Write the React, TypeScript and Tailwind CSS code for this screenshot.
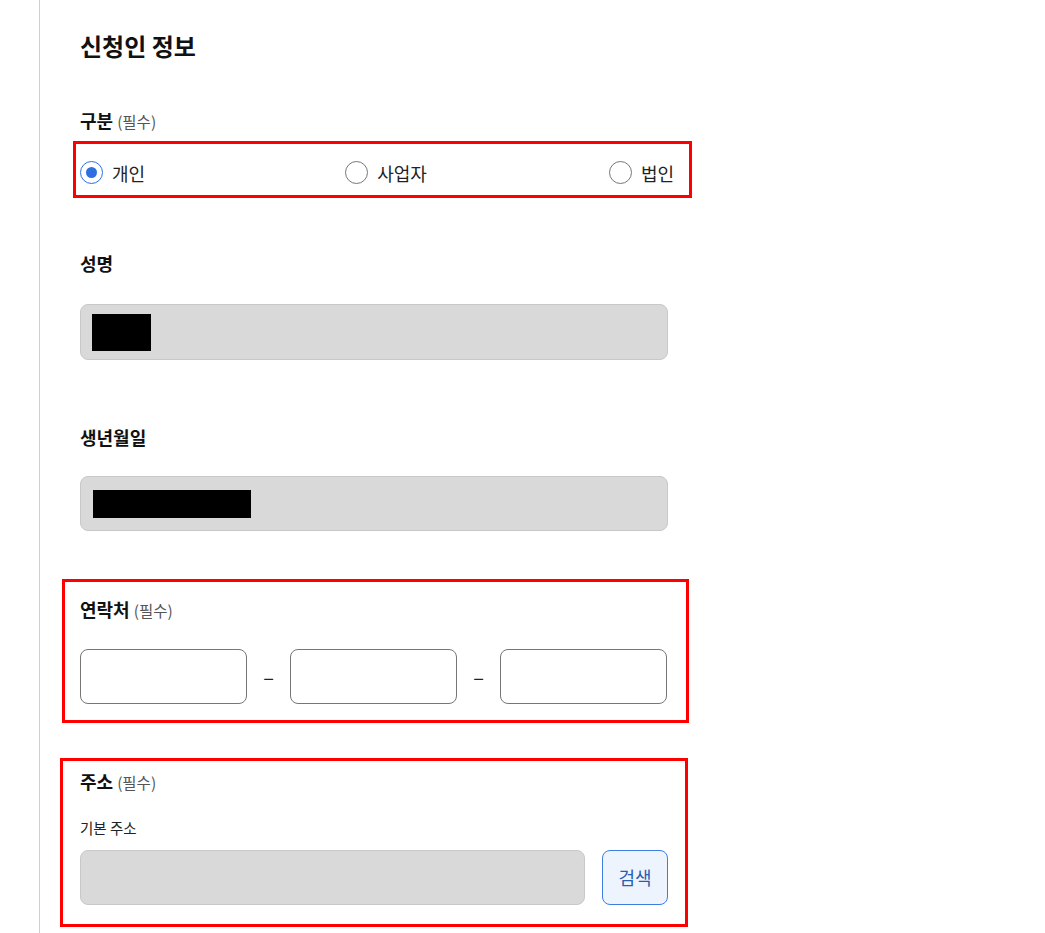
import { useState } from 'react'

const FONT = "font-['Noto_Sans_CJK_KR','Noto_Sans',sans-serif]"

function FieldLabel({ text, required }: { text: string; required?: boolean }) {
  return (
    <div className="text-[18px] leading-[24px] font-bold text-[#111]">
      {text}
      {required && <span className="ml-[4px] text-[15.5px] font-normal text-[#555]">(필수)</span>}
    </div>
  )
}

function Radio({ label, checked, onClick, className = '' }: { label: string; checked: boolean; onClick: () => void; className?: string }) {
  return (
    <button type="button" onClick={onClick} className={`flex items-center gap-[9px] ${className}`}>
      <span
        className={`flex h-[23px] w-[23px] items-center justify-center rounded-full border ${
          checked ? 'border-[#2f6fe0]' : 'border-[#767676]'
        }`}
      >
        {checked && <span className="h-[11px] w-[11px] rounded-full bg-[#2f6fe0]" />}
      </span>
      <span className="text-[18px] leading-[22px] text-[#222]">{label}</span>
    </button>
  )
}

export default function App() {
  const [kind, setKind] = useState('개인')
  const kinds = ['개인', '사업자', '법인']

  return (
    <div className={`min-h-screen bg-white ${FONT}`}>
      <div className="ml-[39px] min-h-screen border-l border-[#cfcfcf] pl-[40px] pt-[30px]">
        <div className="w-[588px]">
          <h2 className="text-[24px] leading-[32px] font-bold text-[#111]">신청인 정보</h2>

          {/* 구분 */}
          <div className="mt-[46px]">
            <FieldLabel text="구분" required />
          </div>
          <div className="mt-[8px] ml-[-7px] w-[619px] border-[3px] border-[#ff0000] pt-[17px] pb-[11px] pl-[4px]">
            <div className="flex w-[594px] items-center justify-between">
              {kinds.map((k, i) => (
                <Radio
                  key={k}
                  label={k}
                  checked={kind === k}
                  onClick={() => setKind(k)}
                  className={i === 1 ? 'ml-[18px]' : ''}
                />
              ))}
            </div>
          </div>

          {/* 성명 */}
          <div className="mt-[53px]">
            <FieldLabel text="성명" />
          </div>
          <div className="mt-[29px] flex h-[56px] items-center rounded-[8px] border border-[#c8c8c8] bg-[#d9d9d9] pl-[11px]">
            <div className="h-[37px] w-[59px] bg-black" />
          </div>

          {/* 생년월일 */}
          <div className="mt-[65px]">
            <FieldLabel text="생년월일" />
          </div>
          <div className="mt-[27px] flex h-[55px] items-center rounded-[8px] border border-[#c8c8c8] bg-[#d9d9d9] pl-[12px]">
            <div className="h-[28px] w-[158px] bg-black" />
          </div>

          {/* 연락처 */}
          <div className="mt-[48px] ml-[-18px] w-[627px] border-[3px] border-[#ff0000] pt-[15px] pb-[16px] pl-[15px]">
            <FieldLabel text="연락처" required />
            <div className="mt-[27px] flex w-[588px] items-center">
              <input className="h-[55px] w-[167px] rounded-[8px] border border-[#767676] bg-white outline-none" />
              <span className="w-[43px] text-center text-[20px] leading-[24px] text-[#222]">–</span>
              <input className="h-[55px] w-[167px] rounded-[8px] border border-[#767676] bg-white outline-none" />
              <span className="w-[43px] text-center text-[20px] leading-[24px] text-[#222]">–</span>
              <input className="h-[55px] w-[167px] rounded-[8px] border border-[#767676] bg-white outline-none" />
            </div>
          </div>

          {/* 주소 */}
          <div className="mt-[35px] ml-[-20px] w-[628px] border-[3px] border-[#ff0000] pt-[8px] pb-[19px] pl-[17px]">
            <FieldLabel text="주소" required />
            <div className="mt-[24px] text-[14.5px] leading-[20px] text-[#222]">기본 주소</div>
            <div className="mt-[12px] flex w-[588px] items-center gap-[17px]">
              <div className="h-[55px] flex-1 rounded-[8px] border border-[#c8c8c8] bg-[#d9d9d9]" />
              <button
                type="button"
                className="h-[55px] w-[66px] rounded-[8px] border border-[#3d7ddf] bg-[#eef4fe] text-[18px] text-[#2a5db0]"
              >
                검색
              </button>
            </div>
          </div>

          <div className="mt-[4px] text-[14.5px] leading-[20px] text-[#222]">상세 주소</div>
          <div className="mt-[12px] h-[55px] rounded-[8px] border border-[#767676] bg-white" />
        </div>
      </div>
    </div>
  )
}
